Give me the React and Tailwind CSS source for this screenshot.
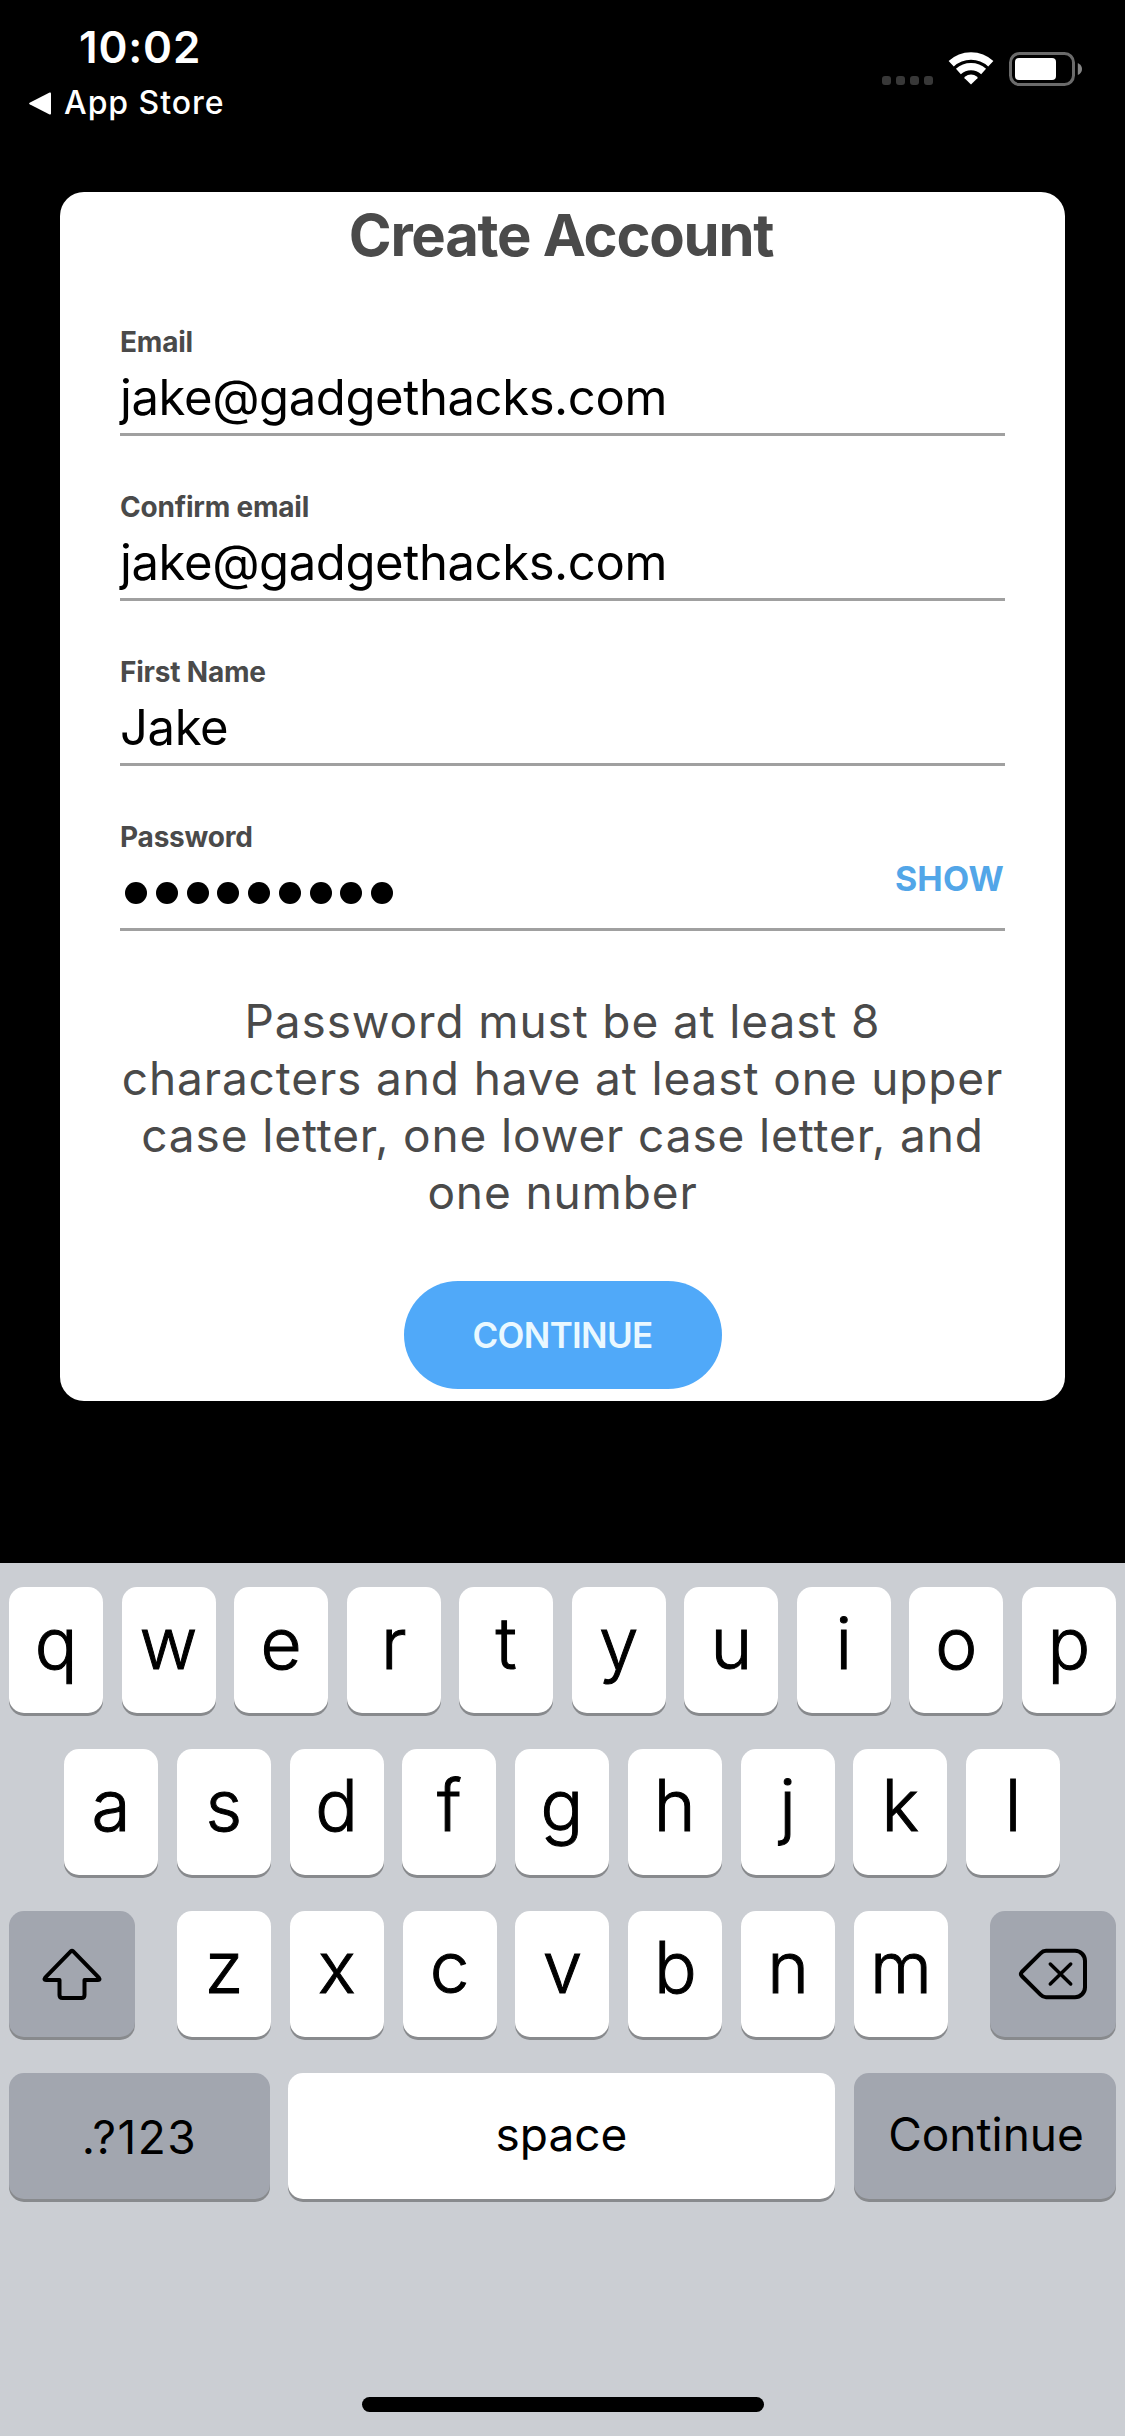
import clsx from 'clsx'

const fields = [
  { label: 'Email', value: 'jake@gadgethacks.com' },
  { label: 'Confirm email', value: 'jake@gadgethacks.com' },
  { label: 'First Name', value: 'Jake' },
]

const passwordLength = 9

export default function App() {
  return (
    <div className="flex h-[2436px] w-[1125px] flex-col overflow-hidden bg-black font-['Inter',sans-serif]">
      <StatusBar />
      <main className="h-[1371px] px-[60px]">
        <CreateAccountCard />
      </main>
      <Keyboard />
    </div>
  )
}

function StatusBar() {
  return (
    <header className="flex h-[192px] shrink-0 justify-between text-white">
      <div className="pt-[23px]">
        <div className="pl-[79px] text-[44px] leading-[48px] font-semibold tracking-[0.8px]">10:02</div>
        <div className="mt-3 flex items-center gap-[13px] pl-[29px]">
          <svg className="h-[23px] w-[22px]" viewBox="0 0 22 23" fill="currentColor">
            <path d="M0.6 10.7L20.6 0.6Q22 0 22 1.6V21.4Q22 23 20.6 22.4L0.6 12.3Q-0.4 11.5 0.6 10.7Z" />
          </svg>
          <span className="text-[32px] leading-10 font-medium tracking-[0.95px]">App Store</span>
        </div>
      </div>
      <div className="flex h-[86px] items-end pr-[43px]">
        <div className="mb-px flex gap-[5px]">
          {[0, 1, 2, 3].map((dot) => <span key={dot} className="size-[9px] rounded-[3px] bg-[#383838]" />)}
        </div>
        <WifiIcon />
        <BatteryIcon />
      </div>
    </header>
  )
}

function WifiIcon() {
  return (
    <svg className="ml-[15px] h-[34px] w-[46px]" viewBox="0 0 46 34" fill="none" stroke="#fff">
      <path d="M3.2 11.8A29 29 0 0 1 42.8 11.8" strokeWidth="7.6" />
      <path d="M10.4 19.5A18.5 18.5 0 0 1 35.6 19.5" strokeWidth="7.2" />
      <path d="M23 32.6L16.6 26.2Q16 25.4 16.8 24.8A10.5 10.5 0 0 1 29.2 24.8Q30 25.4 29.4 26.2Z" fill="#fff" stroke="none" />
    </svg>
  )
}

function BatteryIcon() {
  return (
    <svg className="ml-[15px] h-[34px] w-[73px]" viewBox="0 0 73 34">
      <rect x="1.5" y="1.5" width="63" height="31" rx="9" fill="none" stroke="#6b6b6b" strokeWidth="3" />
      <rect x="6" y="6" width="41" height="22" rx="4" fill="#fff" />
      <path d="M68.8 11Q73 13 73 17T68.8 23Z" fill="#858585" />
    </svg>
  )
}

function CreateAccountCard() {
  return (
    <section className="flex h-[1209px] flex-col items-center rounded-[24px] bg-white px-[60px] pt-[11px]">
      <h1 className="mr-[3px] text-[58px] leading-[64px] font-bold tracking-[-1.26px] text-[#4a4a4a]">Create Account</h1>
      <form className="mt-[58px] grid w-full gap-[54px]">
        {fields.map((field) => (
          <Field key={field.label} label={field.label}>
            <span className="text-[49px] tracking-[-0.4px]">{field.value}</span>
          </Field>
        ))}
        <Field label="Password">
          <div className="flex h-full items-center gap-[8.75px] pl-[5px]">
            {Array.from({ length: passwordLength }, (_, i) => <span key={i} className="size-[22px] rounded-full bg-black" />)}
          </div>
          <button type="button" className="-mt-[29px] mr-px text-[34px] font-bold tracking-[0.2px] text-[#52a6e8]">SHOW</button>
        </Field>
      </form>
      <p className="mt-[62px] w-[885px] text-center text-[46px] leading-[57px] tracking-[0.87px] text-[#4a4a4a]">
        Password must be at least 8 characters and have at least one upper case letter, one lower case letter, and one number
      </p>
      <button className="mt-[60px] h-[108px] w-[318px] rounded-full bg-[#50a9f9] text-[35px] font-semibold tracking-[-0.7px] text-[#eaf8ff]">
        CONTINUE
      </button>
    </section>
  )
}

function Field({ label, children }) {
  return (
    <div className="h-[111px] border-b-[3px] border-[#a0a0a0]">
      <div className="text-[28px] leading-[34px] font-bold tracking-[-0.2px] text-[#4a4a4a]">{label}</div>
      <div className="mt-[9px] flex h-[60px] items-center justify-between leading-[60px] text-black">{children}</div>
    </div>
  )
}

function Keyboard() {
  return (
    <section className="flex h-[873px] flex-col items-center bg-[#cbced3] pt-6 text-black">
      <div className="grid gap-9">
        <div className="flex w-[1125px] justify-between px-[9px]">
          <LetterKeys letters="qwertyuiop" />
        </div>
        <div className="flex justify-between pr-[65px] pl-[64px]">
          <LetterKeys letters="asdfghjkl" />
        </div>
        <div className="flex justify-between px-[9px]">
          <Key dark className="w-[126px]">
            <ShiftIcon />
          </Key>
          <div className="flex w-[771px] justify-between">
            <LetterKeys letters="zxcvbnm" />
          </div>
          <Key dark className="w-[126px]">
            <DeleteIcon />
          </Key>
        </div>
        <div className="flex gap-[18px] px-[9px]">
          <Key dark className="w-[261px] pt-[2px] text-[46px] tracking-[1.5px]">.?123</Key>
          <Key className="mr-px w-[547px] pb-1 text-[46px]">space</Key>
          <Key dark className="w-[262px] pb-1 pl-[2px] text-[46px]">Continue</Key>
        </div>
      </div>
      <div className="mt-[198px] h-[15px] w-[402px] rounded-full bg-black" />
    </section>
  )
}

function LetterKeys({ letters }) {
  return letters.split('').map((letter) => (
    <Key key={letter} className="w-[94px] pb-[14px] text-[71px] font-light [-webkit-text-stroke:1px_black]">{letter}</Key>
  ))
}

function Key({ dark = false, className, children }) {
  return (
    <div
      className={clsx(
        'flex h-[126px] items-center justify-center rounded-[15px] leading-none shadow-[0_3px_0_#888a8d]',
        dark ? 'bg-[#a2a6af]' : 'bg-white',
        className,
      )}
    >
      {children}
    </div>
  )
}

function ShiftIcon() {
  return (
    <svg className="h-[52px] w-[60px]" viewBox="0 0 60 52" fill="none" stroke="currentColor" strokeWidth="4" strokeLinejoin="round">
      <path d="M31 3.2L56.8 29.6Q58.6 32 56 32H42.5V47Q42.5 50 39.5 50H20.5Q17.5 50 17.5 47V32H4Q1.4 32 3.2 29.6L29 3.2Q30 2.2 31 3.2Z" />
    </svg>
  )
}

function DeleteIcon() {
  return (
    <svg className="h-[52px] w-[70px]" viewBox="0 0 70 52" fill="none" stroke="currentColor" strokeWidth="4" strokeLinecap="round" strokeLinejoin="round">
      <path d="M28 2.8H57A10 10 0 0 1 67 12.8V39.2A10 10 0 0 1 57 49.2H28Q25 49.2 22.5 46.6L3.8 28Q2 26 3.8 24L22.5 5.4Q25 2.8 28 2.8Z" />
      <path d="M32.3 16L52.7 36M52.7 16L32.3 36" strokeWidth="3.5" />
    </svg>
  )
}
